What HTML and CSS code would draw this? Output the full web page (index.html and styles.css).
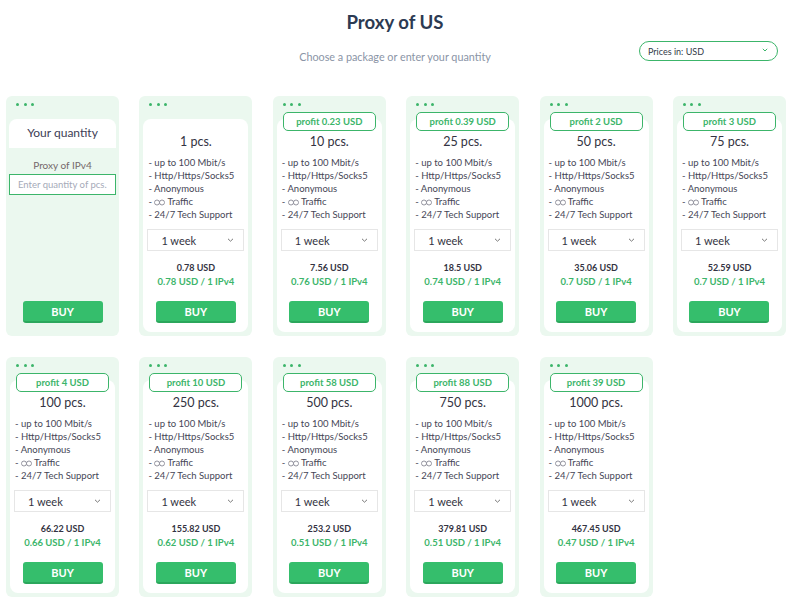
FILE: index.html
```html
<!DOCTYPE html>
<html lang="en">
<head>
<meta charset="utf-8">
<title>Proxy of US</title>
<link rel="stylesheet" href="styles.css">
</head>
<body>
<header class="head">
  <h1 class="title">Proxy of US</h1>
  <div class="subrow">
    <span></span>
    <p class="subtitle">Choose a package or enter your quantity</p>
    <div class="currency">
      <span>Prices in: USD</span>
      <svg class="cur-chev" width="6" height="4" viewBox="0 0 6 4"><path d="M0.8 0.8 L3 3 L5.2 0.8" fill="none" stroke="#3cb56a" stroke-width="1"/></svg>
    </div>
  </div>
</header>

<main class="grid">
  <div class="card">
    <div class="dots"><i></i><i></i><i></i></div>
    <div class="custom-head">Your quantity</div>
    <div class="custom-label">Proxy of IPv4</div>
    <input class="qty" type="text" placeholder="Enter quantity of pcs.">
    <button class="buy">BUY</button>
  </div>

  <div class="card">
    <div class="dots"><i></i><i></i><i></i></div>
    <div class="inner">
      <div class="badge-slot"></div>
      <div class="pcs">1 pcs.</div>
      <ul class="feat"><li>- up to 100 Mbit/s</li><li>- Http/Https/Socks5</li><li>- Anonymous</li><li>- <svg class="inf" width="11" height="7" viewBox="0 0 11 7"><circle cx="3" cy="3.5" r="2.5"/><circle cx="8" cy="3.5" r="2.5"/></svg> Traffic</li><li>- 24/7 Tech Support</li></ul>
      <div class="period"><span>1 week</span><svg width="7" height="4" viewBox="0 0 7 4"><path d="M1 0.8 L3.5 3.2 L6 0.8" fill="none" stroke="#777" stroke-width="1"/></svg></div>
      <div class="total">0.78 USD</div>
      <div class="unit">0.78 USD / 1 IPv4</div>
      <button class="buy">BUY</button>
    </div>
  </div>

  <div class="card">
    <div class="dots"><i></i><i></i><i></i></div>
    <div class="inner">
      <div class="badge-slot"><span class="badge">profit 0.23 USD</span></div>
      <div class="pcs">10 pcs.</div>
      <ul class="feat"><li>- up to 100 Mbit/s</li><li>- Http/Https/Socks5</li><li>- Anonymous</li><li>- <svg class="inf" width="11" height="7" viewBox="0 0 11 7"><circle cx="3" cy="3.5" r="2.5"/><circle cx="8" cy="3.5" r="2.5"/></svg> Traffic</li><li>- 24/7 Tech Support</li></ul>
      <div class="period"><span>1 week</span><svg width="7" height="4" viewBox="0 0 7 4"><path d="M1 0.8 L3.5 3.2 L6 0.8" fill="none" stroke="#777" stroke-width="1"/></svg></div>
      <div class="total">7.56 USD</div>
      <div class="unit">0.76 USD / 1 IPv4</div>
      <button class="buy">BUY</button>
    </div>
  </div>

  <div class="card">
    <div class="dots"><i></i><i></i><i></i></div>
    <div class="inner">
      <div class="badge-slot"><span class="badge">profit 0.39 USD</span></div>
      <div class="pcs">25 pcs.</div>
      <ul class="feat"><li>- up to 100 Mbit/s</li><li>- Http/Https/Socks5</li><li>- Anonymous</li><li>- <svg class="inf" width="11" height="7" viewBox="0 0 11 7"><circle cx="3" cy="3.5" r="2.5"/><circle cx="8" cy="3.5" r="2.5"/></svg> Traffic</li><li>- 24/7 Tech Support</li></ul>
      <div class="period"><span>1 week</span><svg width="7" height="4" viewBox="0 0 7 4"><path d="M1 0.8 L3.5 3.2 L6 0.8" fill="none" stroke="#777" stroke-width="1"/></svg></div>
      <div class="total">18.5 USD</div>
      <div class="unit">0.74 USD / 1 IPv4</div>
      <button class="buy">BUY</button>
    </div>
  </div>

  <div class="card">
    <div class="dots"><i></i><i></i><i></i></div>
    <div class="inner">
      <div class="badge-slot"><span class="badge">profit 2 USD</span></div>
      <div class="pcs">50 pcs.</div>
      <ul class="feat"><li>- up to 100 Mbit/s</li><li>- Http/Https/Socks5</li><li>- Anonymous</li><li>- <svg class="inf" width="11" height="7" viewBox="0 0 11 7"><circle cx="3" cy="3.5" r="2.5"/><circle cx="8" cy="3.5" r="2.5"/></svg> Traffic</li><li>- 24/7 Tech Support</li></ul>
      <div class="period"><span>1 week</span><svg width="7" height="4" viewBox="0 0 7 4"><path d="M1 0.8 L3.5 3.2 L6 0.8" fill="none" stroke="#777" stroke-width="1"/></svg></div>
      <div class="total">35.06 USD</div>
      <div class="unit">0.7 USD / 1 IPv4</div>
      <button class="buy">BUY</button>
    </div>
  </div>

  <div class="card">
    <div class="dots"><i></i><i></i><i></i></div>
    <div class="inner">
      <div class="badge-slot"><span class="badge">profit 3 USD</span></div>
      <div class="pcs">75 pcs.</div>
      <ul class="feat"><li>- up to 100 Mbit/s</li><li>- Http/Https/Socks5</li><li>- Anonymous</li><li>- <svg class="inf" width="11" height="7" viewBox="0 0 11 7"><circle cx="3" cy="3.5" r="2.5"/><circle cx="8" cy="3.5" r="2.5"/></svg> Traffic</li><li>- 24/7 Tech Support</li></ul>
      <div class="period"><span>1 week</span><svg width="7" height="4" viewBox="0 0 7 4"><path d="M1 0.8 L3.5 3.2 L6 0.8" fill="none" stroke="#777" stroke-width="1"/></svg></div>
      <div class="total">52.59 USD</div>
      <div class="unit">0.7 USD / 1 IPv4</div>
      <button class="buy">BUY</button>
    </div>
  </div>

  <div class="card">
    <div class="dots"><i></i><i></i><i></i></div>
    <div class="inner">
      <div class="badge-slot"><span class="badge">profit 4 USD</span></div>
      <div class="pcs">100 pcs.</div>
      <ul class="feat"><li>- up to 100 Mbit/s</li><li>- Http/Https/Socks5</li><li>- Anonymous</li><li>- <svg class="inf" width="11" height="7" viewBox="0 0 11 7"><circle cx="3" cy="3.5" r="2.5"/><circle cx="8" cy="3.5" r="2.5"/></svg> Traffic</li><li>- 24/7 Tech Support</li></ul>
      <div class="period"><span>1 week</span><svg width="7" height="4" viewBox="0 0 7 4"><path d="M1 0.8 L3.5 3.2 L6 0.8" fill="none" stroke="#777" stroke-width="1"/></svg></div>
      <div class="total">66.22 USD</div>
      <div class="unit">0.66 USD / 1 IPv4</div>
      <button class="buy">BUY</button>
    </div>
  </div>

  <div class="card">
    <div class="dots"><i></i><i></i><i></i></div>
    <div class="inner">
      <div class="badge-slot"><span class="badge">profit 10 USD</span></div>
      <div class="pcs">250 pcs.</div>
      <ul class="feat"><li>- up to 100 Mbit/s</li><li>- Http/Https/Socks5</li><li>- Anonymous</li><li>- <svg class="inf" width="11" height="7" viewBox="0 0 11 7"><circle cx="3" cy="3.5" r="2.5"/><circle cx="8" cy="3.5" r="2.5"/></svg> Traffic</li><li>- 24/7 Tech Support</li></ul>
      <div class="period"><span>1 week</span><svg width="7" height="4" viewBox="0 0 7 4"><path d="M1 0.8 L3.5 3.2 L6 0.8" fill="none" stroke="#777" stroke-width="1"/></svg></div>
      <div class="total">155.82 USD</div>
      <div class="unit">0.62 USD / 1 IPv4</div>
      <button class="buy">BUY</button>
    </div>
  </div>

  <div class="card">
    <div class="dots"><i></i><i></i><i></i></div>
    <div class="inner">
      <div class="badge-slot"><span class="badge">profit 58 USD</span></div>
      <div class="pcs">500 pcs.</div>
      <ul class="feat"><li>- up to 100 Mbit/s</li><li>- Http/Https/Socks5</li><li>- Anonymous</li><li>- <svg class="inf" width="11" height="7" viewBox="0 0 11 7"><circle cx="3" cy="3.5" r="2.5"/><circle cx="8" cy="3.5" r="2.5"/></svg> Traffic</li><li>- 24/7 Tech Support</li></ul>
      <div class="period"><span>1 week</span><svg width="7" height="4" viewBox="0 0 7 4"><path d="M1 0.8 L3.5 3.2 L6 0.8" fill="none" stroke="#777" stroke-width="1"/></svg></div>
      <div class="total">253.2 USD</div>
      <div class="unit">0.51 USD / 1 IPv4</div>
      <button class="buy">BUY</button>
    </div>
  </div>

  <div class="card">
    <div class="dots"><i></i><i></i><i></i></div>
    <div class="inner">
      <div class="badge-slot"><span class="badge">profit 88 USD</span></div>
      <div class="pcs">750 pcs.</div>
      <ul class="feat"><li>- up to 100 Mbit/s</li><li>- Http/Https/Socks5</li><li>- Anonymous</li><li>- <svg class="inf" width="11" height="7" viewBox="0 0 11 7"><circle cx="3" cy="3.5" r="2.5"/><circle cx="8" cy="3.5" r="2.5"/></svg> Traffic</li><li>- 24/7 Tech Support</li></ul>
      <div class="period"><span>1 week</span><svg width="7" height="4" viewBox="0 0 7 4"><path d="M1 0.8 L3.5 3.2 L6 0.8" fill="none" stroke="#777" stroke-width="1"/></svg></div>
      <div class="total">379.81 USD</div>
      <div class="unit">0.51 USD / 1 IPv4</div>
      <button class="buy">BUY</button>
    </div>
  </div>

  <div class="card">
    <div class="dots"><i></i><i></i><i></i></div>
    <div class="inner">
      <div class="badge-slot"><span class="badge">profit 39 USD</span></div>
      <div class="pcs">1000 pcs.</div>
      <ul class="feat"><li>- up to 100 Mbit/s</li><li>- Http/Https/Socks5</li><li>- Anonymous</li><li>- <svg class="inf" width="11" height="7" viewBox="0 0 11 7"><circle cx="3" cy="3.5" r="2.5"/><circle cx="8" cy="3.5" r="2.5"/></svg> Traffic</li><li>- 24/7 Tech Support</li></ul>
      <div class="period"><span>1 week</span><svg width="7" height="4" viewBox="0 0 7 4"><path d="M1 0.8 L3.5 3.2 L6 0.8" fill="none" stroke="#777" stroke-width="1"/></svg></div>
      <div class="total">467.45 USD</div>
      <div class="unit">0.47 USD / 1 IPv4</div>
      <button class="buy">BUY</button>
    </div>
  </div>
</main>
</body>
</html>
```

FILE: styles.css
```css
* { box-sizing: border-box; }

body {
  margin: 0;
  background: #ffffff;
  font-family: Lato, "Open Sans", "Liberation Sans", sans-serif;
  color: #3b3b4b;
}

.head { padding-top: 10px; }

.title {
  margin: 0;
  text-align: center;
  font-size: 18.6px;
  line-height: 24px;
  font-weight: 700;
  color: #2c3a52;
}

.subrow {
  display: grid;
  grid-template-columns: 1fr auto 1fr;
  margin-top: 7px;
  margin-bottom: 32px;
  height: 23px;
}

.subtitle {
  margin: 0;
  padding-top: 9px;
  font-size: 10.8px;
  line-height: 14px;
  color: #8a94a6;
}

.currency {
  justify-self: end;
  margin-right: 12px;
  width: 139px;
  height: 20px;
  border: 1px solid #3cb56a;
  border-radius: 10px;
  display: flex;
  align-items: center;
  justify-content: space-between;
  padding: 0 9px 0 8px;
  font-size: 9px;
  color: #333a48;
}

.cur-chev { margin-top: -2px; }

.grid {
  display: grid;
  grid-template-columns: repeat(6, 1fr);
  column-gap: 20.4px;
  row-gap: 21px;
  padding: 0 4px 0 6px;
}

.card {
  height: 240px;
  background: #ebf8ef;
  border-radius: 6px;
  padding: 0 4px 4px;
  display: flex;
  flex-direction: column;
}

.dots {
  height: 23px;
  padding: 7px 0 0 6px;
  display: flex;
  gap: 4.5px;
}

.dots i {
  width: 3px;
  height: 3px;
  border-radius: 50%;
  background: #3cb56a;
}

.inner {
  flex: 1;
  background: #ffffff;
  border-radius: 8px;
  display: flex;
  flex-direction: column;
  align-items: stretch;
  padding: 0 4px 9px;
}

.badge-slot {
  height: 12px;
  display: flex;
  justify-content: center;
}

.badge {
  margin-top: -7px;
  width: 93px;
  height: 19px;
  flex: none;
  border: 1px solid #3cb56a;
  border-radius: 5px;
  background: #ffffff;
  color: #3cb56a;
  font-size: 9.5px;
  line-height: 17px;
  font-weight: 700;
  text-align: center;
}

.pcs {
  text-align: center;
  font-size: 12.5px;
  line-height: 22px;
  color: #333342;
}

.feat {
  list-style: none;
  margin: 3px 0 0;
  padding: 0 0 0 1px;
  font-size: 9.5px;
  line-height: 13px;
  color: #464656;
}

.inf {
  vertical-align: -1px;
  fill: none;
  stroke: #8a8a96;
  stroke-width: 0.9;
}

.period {
  margin-top: 8px;
  height: 22px;
  border: 1px solid #e6e6e6;
  display: flex;
  align-items: center;
  justify-content: space-between;
  padding: 0 9px 0 13px;
  font-size: 11px;
  color: #333342;
}

.total {
  margin-top: 10px;
  text-align: center;
  font-size: 9px;
  line-height: 13px;
  font-weight: 700;
  color: #333342;
}

.unit {
  margin-top: 1px;
  text-align: center;
  font-size: 9.5px;
  line-height: 14px;
  font-weight: 700;
  color: #3cb56a;
}

.buy {
  margin: auto auto 0;
  width: 80px;
  height: 22px;
  border: 0;
  border-bottom: 2px solid #2ba75c;
  border-radius: 3px;
  background: #35be6c;
  color: #ffffff;
  font-family: inherit;
  font-size: 11px;
  font-weight: 700;
  padding: 0;
}

.card > .buy { margin-bottom: 9px; }

.custom-head {
  margin: 0 -1px;
  height: 29px;
  background: #ffffff;
  border-radius: 8px 8px 0 0;
  text-align: center;
  font-size: 12px;
  line-height: 27px;
  color: #3d3d55;
}

.custom-label {
  margin-top: 11px;
  text-align: center;
  font-size: 10px;
  line-height: 13px;
  color: #75686a;
}

.qty {
  margin: 2px -1px 0;
  height: 21px;
  width: calc(100% + 2px);
  border: 1px solid #3cb56a;
  background: #ffffff;
  font-family: inherit;
  font-size: 9.5px;
  padding: 0 0 0 8px;
  color: #333;
  outline: none;
}

.qty::placeholder { color: #a5aab8; }
```
